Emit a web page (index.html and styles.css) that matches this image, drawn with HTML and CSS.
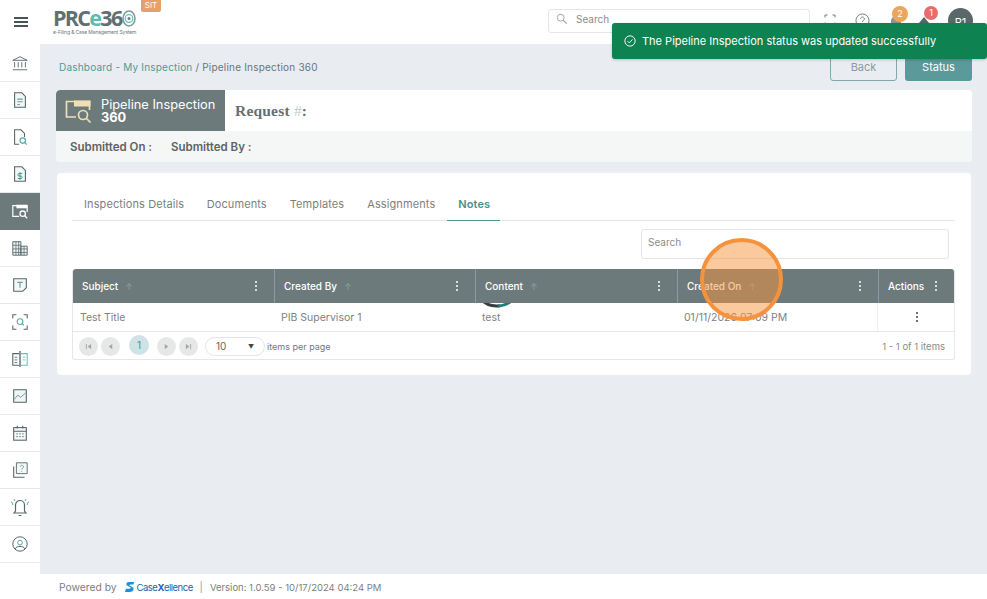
FILE: index.html
```html
<!DOCTYPE html>
<html lang="en">
<head>
<meta charset="utf-8">
<title>Pipeline Inspection 360</title>
<link rel="stylesheet" href="styles.css">
</head>
<body>
<header class="topbar">
  <button class="burger" aria-label="Menu"><span></span><span></span><span></span></button>
  <div class="logo">
    <div class="logo-mark"><span class="l-a">PRC</span><span class="l-b">e</span><span class="l-a">36</span><svg class="logo-o" viewBox="0 0 14 17" width="14" height="17"><ellipse cx="7" cy="8.500" rx="6" ry="7.500" fill="none" stroke="#7f9a98" stroke-width="1.500"/><circle cx="7" cy="8.500" r="3.800" fill="none" stroke="#6fc1b8" stroke-width="1.300"/><circle cx="7" cy="8.500" r="1.500" fill="#6d7a7b"/></svg></div>
    <div class="logo-sub">e-Filing &amp; Case Management System</div>
  </div>
  <span class="sit">SIT</span>
  <div class="top-search">
    <svg viewBox="0 0 14 14" width="12" height="12"><circle cx="5.500" cy="5.500" r="4" fill="none" stroke="#999" stroke-width="1"/><path d="M8.500 8.500l4 4" stroke="#999" stroke-width="1.200"/></svg>
    <span>Search</span>
  </div>
  <div class="top-icons">
    <svg class="ti ti-full" viewBox="0 0 12 12" width="12" height="12"><path d="M1 3.500V1h2.500M8.500 1H11v2.500M11 8.500V11H8.500M3.500 11H1V8.500" fill="none" stroke="#777" stroke-width="1"/></svg>
    <svg class="ti ti-help" viewBox="0 0 16 16" width="15" height="15"><circle cx="8" cy="8" r="7" fill="none" stroke="#777" stroke-width="1"/><path d="M6 6.200a2 2 0 1 1 3 1.800c-.7.400-1 .8-1 1.600M8 11.200v1" fill="none" stroke="#777" stroke-width="1"/></svg>
    <div class="notif notif-bell">
      <svg viewBox="0 0 16 16" width="16" height="16"><path d="M8 1a5 5 0 0 0-5 5v5l-1 2h12l-1-2V6a5 5 0 0 0-5-5z" fill="#8b9596"/></svg>
      <span class="badge badge-o">2</span>
    </div>
    <div class="notif notif-up">
      <svg viewBox="0 0 16 16" width="16" height="16"><path d="M8 2l5 6h-3v6H6V8H3z" fill="#56666a"/></svg>
      <span class="badge badge-r">1</span>
    </div>
    <div class="avatar">P1</div>
  </div>
</header>

<div class="shell">
  <nav class="sidebar">
    <a class="side-item"><svg viewBox="0 0 20 20" width="18" height="18"><path d="M2 7l8-4 8 4zM4 9v6M8 9v6M12 9v6M16 9v6M2 17.500h16" fill="none" stroke="#56666a" stroke-width="1"/></svg></a>
    <a class="side-item"><svg viewBox="0 0 20 20" width="18" height="18"><path d="M4 2h8l4 4v12H4z" fill="#f2f7f6" stroke="#56666a" stroke-width="1.200"/><path d="M7 9h6M7 12h6M7 15h3" stroke="#5aa8a0" stroke-width="1.200"/></svg></a>
    <a class="side-item"><svg viewBox="0 0 20 20" width="18" height="18"><path d="M9 18H4V2h7l4 4v4" fill="none" stroke="#56666a" stroke-width="1.200"/><circle cx="13" cy="14" r="3" fill="none" stroke="#5aa8a0" stroke-width="1.300"/><path d="M15 16l2.500 2.500" stroke="#5aa8a0" stroke-width="1.300"/></svg></a>
    <a class="side-item"><svg viewBox="0 0 20 20" width="18" height="18"><path d="M4 2h8l4 4v12H4z" fill="#f2f7f6" stroke="#56666a" stroke-width="1.200"/><path d="M12.500 9.500h-3.500a1.300 1.300 0 0 0 0 2.800h2a1.300 1.300 0 0 1 0 2.700H7.500M10 8v8.500" fill="none" stroke="#3d9088" stroke-width="1"/></svg></a>
    <a class="side-item side-active"><svg viewBox="0 0 20 20" width="18" height="18"><path d="M9 16H2V4h16v7" fill="none" stroke="#fff" stroke-width="1.300"/><path d="M6 3h12v4H6z" fill="#fff"/><circle cx="13" cy="13" r="3" fill="none" stroke="#fff" stroke-width="1.400"/><path d="M15 15l3 3" stroke="#fff" stroke-width="1.400"/></svg></a>
    <a class="side-item"><svg viewBox="0 0 20 20" width="18" height="18"><path d="M2 3h9v15H2zM11 8h7v10h-7z" fill="#e8f1f0" stroke="#56666a" stroke-width="1"/><path d="M2 7h9M2 11h16M2 15h16M5.500 3v15M8.500 3v15M14.500 8v10" stroke="#56666a" stroke-width=".8"/></svg></a>
    <a class="side-item"><svg viewBox="0 0 20 20" width="18" height="18"><path d="M3 3h14v10l-4 4H3z" fill="#f6f8f8" stroke="#56666a" stroke-width="1.200"/><path d="M7 7h6M10 7v6" stroke="#5aa8a0" stroke-width="1.300"/></svg></a>
    <a class="side-item"><svg viewBox="0 0 20 20" width="18" height="18"><path d="M2 6V2h4M14 2h4v4M18 14v4h-4M6 18H2v-4" fill="none" stroke="#56666a" stroke-width="1.200"/><circle cx="10" cy="9.500" r="3.200" fill="none" stroke="#5aa8a0" stroke-width="1.200"/><path d="M12.300 11.800l2 2" stroke="#5aa8a0" stroke-width="1.200"/></svg></a>
    <a class="side-item"><svg viewBox="0 0 20 20" width="18" height="18"><path d="M9 4H2v13h7" fill="none" stroke="#56666a" stroke-width="1.200"/><path d="M11 4h7v13h-7" fill="none" stroke="#6fc1b8" stroke-width="1.200"/><path d="M10 1v18" stroke="#56666a" stroke-width="1.500"/><path d="M4 8h3M4 11h3M4 14h3" stroke="#56666a" stroke-width="1"/><path d="M13 8h3M13 11h3" stroke="#6fc1b8" stroke-width="1"/></svg></a>
    <a class="side-item"><svg viewBox="0 0 20 20" width="18" height="18"><path d="M3 3h14v14H3z" fill="#f0f6f5" stroke="#56666a" stroke-width="1.200"/><path d="M3.500 14l4-5 3 2.500 6-5" fill="none" stroke="#5aa8a0" stroke-width="1.100"/></svg></a>
    <a class="side-item"><svg viewBox="0 0 20 20" width="18" height="18"><rect x="3" y="4" width="14" height="14" fill="#f6f8f8" stroke="#56666a" stroke-width="1.200"/><path d="M3 8h14M7 2v3M13 2v3" stroke="#56666a" stroke-width="1.200"/><path d="M6 11h1.500M9.200 11h1.500M12.500 11H14M6 14h1.500M9.200 14h1.500M12.500 14H14" stroke="#56666a" stroke-width="1.100"/></svg></a>
    <a class="side-item"><svg viewBox="0 0 20 20" width="18" height="18"><path d="M6 2h12v12H6z" fill="#f6f8f8" stroke="#56666a" stroke-width="1"/><path d="M3 6v12h12" fill="none" stroke="#56666a" stroke-width="1.200"/><path d="M10.300 6.300a1.800 1.800 0 1 1 2.600 1.800c-.6.400-.9.700-.9 1.400M12 11v1" fill="none" stroke="#5aa8a0" stroke-width="1"/></svg></a>
    <a class="side-item"><svg viewBox="0 0 20 20" width="20" height="20"><path d="M10 3.500a4.500 4.500 0 0 0-4.500 4.500v6L4 16h12l-1.500-2V8A4.500 4.500 0 0 0 10 3.500zM8.500 18.500h3" fill="none" stroke="#56666a" stroke-width="1.200"/><path d="M3 8L1.500 4.500M17 8l1.500-3.500M5 4L3.800 2M15 4l1.200-2" stroke="#5aa8a0" stroke-width="1"/></svg></a>
    <a class="side-item"><svg viewBox="0 0 20 20" width="18" height="18"><circle cx="10" cy="10" r="8" fill="none" stroke="#56666a" stroke-width="1.100"/><circle cx="10" cy="8.500" r="2.600" fill="none" stroke="#5aa8a0" stroke-width="1.100"/><path d="M4.500 15.500c1-2 3-2.800 5.500-2.800s4.500.8 5.500 2.800" fill="none" stroke="#56666a" stroke-width="1.100"/></svg></a>
  </nav>

  <div class="content-col">
    <main class="content">
      <div class="crumb-row">
        <div class="crumbs"><a>Dashboard - My Inspection</a> / Pipeline Inspection 360</div>
        <div class="crumb-actions">
          <button class="btn btn-outline">Back</button>
          <button class="btn btn-solid">Status</button>
        </div>
      </div>

      <section class="head-card">
        <div class="head-top">
          <div class="head-label">
            <svg viewBox="0 0 28 24" width="28" height="24"><path d="M11 18H1.500V2.500h23V11" fill="none" stroke="#f1dfb4" stroke-width="1.700"/><path d="M9 1.500h16.500v6H9z" fill="#f1dfb4"/><circle cx="18" cy="16" r="4.500" fill="none" stroke="#f1dfb4" stroke-width="1.700"/><path d="M21.500 19.500l4 4" stroke="#f1dfb4" stroke-width="1.700"/></svg>
            <div class="head-title"><span>Pipeline Inspection</span><b>360</b></div>
          </div>
          <div class="request">Request <span>#</span>:</div>
        </div>
        <div class="head-meta"><b>Submitted On :</b><b>Submitted By :</b></div>
      </section>

      <section class="main-card">
        <div class="tabs">
          <a class="tab">Inspections Details</a>
          <a class="tab">Documents</a>
          <a class="tab">Templates</a>
          <a class="tab">Assignments</a>
          <a class="tab tab-active">Notes</a>
        </div>
        <div class="search-row"><div class="grid-search">Search</div></div>
        <div class="grid">
          <div class="grid-head">
            <div class="gh"><span>Subject</span><i class="arrow">↑</i><em class="dots"></em></div>
            <div class="gh"><span>Created By</span><i class="arrow">↑</i><em class="dots"></em></div>
            <div class="gh"><span>Content</span><i class="arrow">↑</i><em class="dots"></em></div>
            <div class="gh"><span>Created On</span><i class="arrow">↑</i><em class="dots"></em></div>
            <div class="gh gh-actions"><span>Actions</span><em class="dots"></em></div>
          </div>
          <div class="grid-row">
            <div class="gc">Test Title</div>
            <div class="gc">PIB Supervisor 1</div>
            <div class="gc">test</div>
            <div class="gc">01/11/2026 07:09 PM</div>
            <div class="gc gc-actions"><em class="dots dots-dark"></em></div>
          </div>
          <div class="pager">
            <span class="pg"><svg viewBox="0 0 8 8" width="7" height="7"><path d="M1 1h1v6H1zM7 1v6L3 4z" fill="#a5a5a5"/></svg></span>
            <span class="pg"><svg viewBox="0 0 8 8" width="7" height="7"><path d="M6 1v6L2 4z" fill="#a5a5a5"/></svg></span>
            <span class="pg pg-on">1</span>
            <span class="pg"><svg viewBox="0 0 8 8" width="7" height="7"><path d="M2 1v6l4-3z" fill="#a5a5a5"/></svg></span>
            <span class="pg"><svg viewBox="0 0 8 8" width="7" height="7"><path d="M6 1h1v6H6zM1 1v6l4-3z" fill="#a5a5a5"/></svg></span>
            <div class="size"><span>10</span><i>▼</i></div>
            <span class="per">items per page</span>
            <span class="count">1 - 1 of 1 items</span>
          </div>
        </div>
      </section>
    </main>
    <footer class="footer">
      <span class="powered">Powered by</span>
      <span class="cx"><svg viewBox="0 0 12 14" width="10" height="12"><path d="M11 1H5C2 1 1 3 2 5l5 3-1 1H1l-1 4h6c3 0 5-2 4-5L5 5l1-1h4z" fill="#1d8fd6"/></svg><b>Case<u>X</u>ellence</b></span>
      <span class="sep">|</span>
      <span class="version">Version: 1.0.59 - 10/17/2024 04:24 PM</span>
    </footer>
  </div>
</div>

<svg class="spinner" viewBox="0 0 50 50" width="50" height="50"><path d="M8 40.500A23 23 0 0 0 28 47.800" fill="none" stroke="#333f40" stroke-width="3"/><path d="M26 48A23 23 0 0 0 42 40.500" fill="none" stroke="#1d7f78" stroke-width="3"/></svg>
<div class="click-dot"></div>
<div class="toast">
  <svg viewBox="0 0 14 14" width="12" height="12"><circle cx="7" cy="7" r="6" fill="none" stroke="#fff" stroke-width="1.100"/><path d="M4.200 7.200l2 2 3.600-4" fill="none" stroke="#fff" stroke-width="1.100"/></svg>
  <span>The Pipeline Inspection status was updated successfully</span>
</div>
</body>
</html>
```
FILE: styles.css
```css
* { box-sizing: border-box; }
html, body { margin: 0; height: 100%; }
body {
  width: 987px; height: 599px; overflow: hidden; position: relative;
  font-family: Inter, "Open Sans", sans-serif; color: #6b6b6b; background: #fff;
  display: flex; flex-direction: column;
}
.topbar { height: 44px; flex: none; display: flex; align-items: center; background: #fff; position: relative; }
.burger {
  width: 42px; height: 44px; border: 0; background: none; padding: 0; flex: none;
  display: flex; flex-direction: column; justify-content: center; align-items: center; gap: 2px;
}
.burger span { width: 14px; height: 2px; background: #4a5557; }
.logo { margin-left: 11px; width: 84px; flex: none; }
.logo-mark { display: flex; align-items: center; font: 700 21.500px/18px "Open Sans", sans-serif; letter-spacing: -1.700px; }
.l-a { color: #5f6f72; }
.l-b { color: #59bdb2; }
.logo-o { flex: none; margin-left: 0; }
.logo-sub { font-size: 5px; line-height: 6px; margin-top: 2px; color: #6c7779; white-space: nowrap; letter-spacing: -.12px; }
.sit {
  position: absolute; left: 141px; top: 0; width: 20px; height: 12px; background: #e8a06a; color: #fff;
  font-size: 8px; line-height: 10px; text-align: center; border-radius: 0 0 2px 2px;
}
.top-search {
  margin: -3px 0 0 411px; width: 262px; height: 24px; border: 1px solid #e4e6e8; border-radius: 3px; flex: none;
  display: flex; align-items: center; gap: 8px; padding: 0 0 3px 7px; font-size: 10px; color: #8c8c8c;
}
.top-icons { display: flex; align-items: flex-start; margin-left: 14px; height: 44px; padding-top: 8px; }
.ti-full { margin-top: 6px; }
.ti-help { margin: 5px 0 0 19px; }
.notif { position: relative; width: 16px; height: 16px; margin-top: 7px; }
.notif-bell { margin-left: 18px; }
.notif-up { margin-left: 12px; }
.badge {
  position: absolute; left: 4px; top: -9px; width: 16px; height: 16px; border-radius: 50%; color: #fff;
  font-size: 9px; line-height: 15px; text-align: center;
}
.badge-o { background: #eda55b; }
.badge-r { left: 8px; top: -9px; width: 14px; height: 14px; line-height: 14px; background: #ea6b6b; }
.avatar {
  width: 25px; height: 25px; margin-left: 16px; border-radius: 50%; background: #5c6769; color: #fff; font-size: 11px; line-height: 28px; text-align: center;
}
.shell { flex: 1; display: flex; min-height: 0; }
.sidebar { width: 40px; flex: none; background: #fff; padding-top: 1px; box-shadow: 1px 0 0 #eceff2; }
.side-item { height: 37px; display: flex; align-items: center; justify-content: center; border-bottom: 1px solid #e6e8ea; }
.side-active { background: #6d7a7b; border-bottom-color: #6d7a7b; }
.content-col { flex: 1; display: flex; flex-direction: column; min-width: 0; }
.content { flex: 1; background: #e9edf2; padding: 0 15px 0 16px; }
.crumb-row { height: 46px; display: flex; justify-content: space-between; align-items: flex-start; }
.crumbs { font-size: 10px; line-height: 12px; padding: 17px 0 0 3px; color: #6a7476; letter-spacing: .2px; }
.crumbs a { color: #4f9a95; }
.crumb-actions { display: flex; gap: 8px; padding-top: 6px; }
.btn { height: 31px; width: 67px; font: 11px Inter, sans-serif; border-radius: 3px; padding: 2px 0 0; }
.btn-outline { background: transparent; border: 1px solid #7fa9aa; color: #8d9a9a; }
.btn-solid { background: #5b9a9b; border: 0; color: #fff; }
.head-card { border-radius: 4px; overflow: hidden; background: #fff; }
.head-top { display: flex; height: 41px; align-items: center; background: #fff; }
.head-label {
  width: 169px; height: 41px; background: #6d7a7b; display: flex; align-items: center; gap: 8px; padding-left: 9px; flex: none; border-radius: 4px 0 0 0;
}
.head-title { color: #fff; font-size: 12.800px; line-height: 13px; display: flex; flex-direction: column; padding-top: 1px; white-space: nowrap; }
.head-title span { height: 13px; }
.head-title b { font-weight: 700; height: 13px; }
.request { font: 700 15.500px "Liberation Serif", serif; color: #686f70; margin-left: 10px; padding-top: 1px; letter-spacing: .2px; }
.request span { color: #c5c9ca; font-weight: 400; }
.head-meta {
  height: 31px; background: #f5f6f6; display: flex; gap: 19px; align-items: center; padding: 0 0 0 14px; font-size: 11.500px; color: #5d6364;
}
.head-meta b { font-weight: 600; }
.main-card { margin: 11px 1px 0; height: 202px; background: #fff; border-radius: 4px; padding: 15px 16px 0 15px; }
.tabs { height: 33px; border-bottom: 1px solid #e2e5e6; display: flex; padding-left: 0; }
.tab {
  padding: 0 11.500px; font-size: 11px; line-height: 33px; color: #7b7f80; white-space: nowrap; height: 33px; letter-spacing: .1px;
}
.tab:first-child { padding-left: 12px; padding-right: 11px; }
.tab-active { color: #4a8f8c; font-weight: 600; border-bottom: 1px solid #4f9a95; padding: 0 10px 0 11.500px; }
.search-row { display: flex; justify-content: flex-end; padding: 8px 6px 0 0; }
.grid-search {
  width: 308px; height: 30px; border: 1px solid #e3e6e8; border-radius: 3px; font-size: 10px; line-height: 24px; padding-left: 6px; color: #8c8c8c;
}
.grid { margin-top: 10px; border: 1px solid #e5e7e8; border-top: 0; border-radius: 3px; width: 883px; }
.grid-head, .grid-row { display: grid; grid-template-columns: 202px 201px 202px 201px 77px; }
.grid-head {
  height: 34px; background: #6d7a7b; color: #fff; font-size: 10px; font-weight: 500; border-radius: 3px 3px 0 0;
  position: relative; z-index: 2;
}
.gh { display: flex; align-items: center; padding: 0 17px 0 9px; border-right: 1px solid #8a9ba3; }
.gh:last-child { border-right: 0; }
.arrow { font-style: normal; color: #8e9a9b; font-size: 9px; margin-left: 7px; }
.dots { position: relative; margin-left: auto; width: 2px; height: 2px; border-radius: 50%; background: #fff; box-shadow: 0 -4px 0 #fff, 0 4px 0 #fff; }
.gh-actions { padding: 0 19px 0 9px; font-size: 10px; }
.dots-dark { margin: 0 auto; background: #444; box-shadow: 0 -4px 0 #444, 0 4px 0 #444; }
.grid-row { height: 29px; border-bottom: 1px solid #e5e7e8; font-size: 10.500px; color: #808383; align-items: center; margin-left: -1px; }
.gc { padding-left: 8px; }
.gc:nth-child(n+2) { padding-left: 7px; }
.gc.gc-actions { padding: 0; height: 100%; display: flex; align-items: center; box-shadow: -1px 0 0 #eef0f1; }
.pager { height: 27px; display: flex; align-items: center; padding: 1px 0 0 6px; font-size: 9px; color: #777; }
.pg {
  width: 19px; height: 19px; border-radius: 50%; background: #e6e7e7; color: #9a9a9a; margin-right: 3px; flex: none;
  display: flex; align-items: center; justify-content: center;
}
.pg-on { background: #cfe3e6; color: #4f8f90; font-size: 10px; width: 20px; height: 20px; margin: -2px 8px 0 6px; }
.size {
  margin-left: 4px; width: 60px; height: 19px; border: 1px solid #e3e5e6; border-radius: 10px; display: flex; align-items: center; justify-content: space-between;
  padding: 0 10px; font-size: 10px; color: #666;
}
.size i { font-style: normal; font-size: 6px; color: #444; }
.per { margin-left: 2px; }
.count { margin-left: auto; margin-right: 9px; color: #8b8b8b; font-size: 9.500px; }
.footer {
  height: 25px; flex: none; background: #fff; color: #7b7f80; display: flex; align-items: center; gap: 7px; padding: 1px 0 0 19px;
}
.powered { font-size: 10.300px; }
.cx { display: inline-flex; align-items: center; gap: 2px; margin-left: 1px; width: 68px; white-space: nowrap; color: #2a62a8; }
.cx svg { flex: none; }
.cx b { font-weight: 400; font-size: 9.500px; letter-spacing: -.5px; }
.cx u { text-decoration: none; font-weight: 700; }
.sep { color: #999; font-size: 10px; }
.version { font-size: 9.500px; }
.spinner { position: absolute; left: 472px; top: 258px; z-index: 1; }
.click-dot {
  position: absolute; left: 700px; top: 238px; width: 83px; height: 83px; border-radius: 50%; z-index: 3;
  background: rgba(247, 148, 62, .5); border: 4px solid #f5923e;
}
.toast {
  position: absolute; left: 612px; top: 23px; width: 375px; height: 36px; background: #0f8251; color: #fff; border-radius: 3px; z-index: 4;
  display: flex; align-items: center; gap: 6px; padding-left: 12px; font-size: 11px; box-shadow: 0 1px 3px rgba(0,0,0,.2);
}
```
